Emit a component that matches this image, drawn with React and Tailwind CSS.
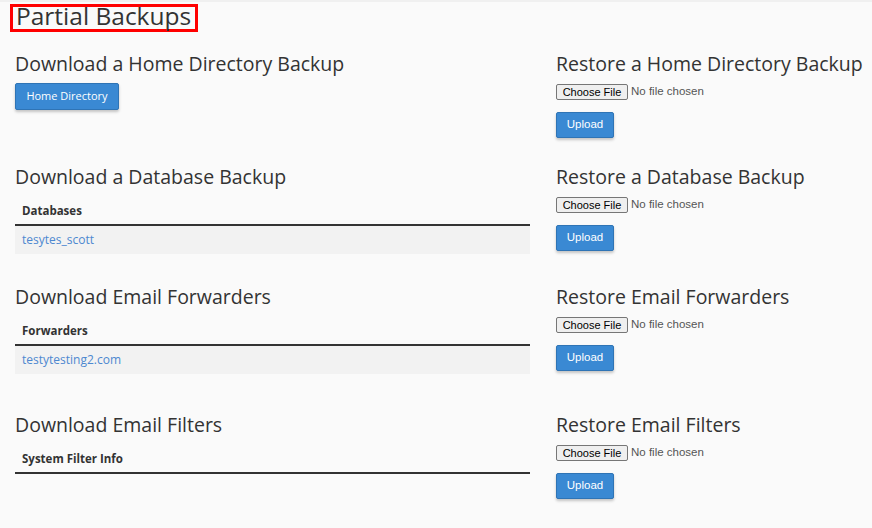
import React from "react";

function FileRow() {
  return (
    <div className="mt-[9px] flex h-[16px] items-center font-['Liberation_Sans',Arial,sans-serif]">
      <span className="flex h-[16px] w-[72px] items-center justify-center rounded-[2px] border border-[#767676] bg-[#efefef] text-[11px] leading-none text-black">
        Choose File
      </span>
      <span className="ml-[3px] text-[11.5px] leading-none text-[#555]">No file chosen</span>
    </div>
  );
}

function UploadButton() {
  return (
    <button className="mt-[12px] flex h-[26px] w-[58px] items-center justify-center rounded-[2px] border border-[#2f74b5] bg-[#3a89d3] font-['Liberation_Sans',Arial,sans-serif] text-[11.5px] text-white shadow-[0_2px_3px_rgba(0,0,0,0.22)]">
      Upload
    </button>
  );
}

function Heading({ children }) {
  return <h2 className="h-[22px] whitespace-nowrap text-[19.5px] leading-[22px] text-[#333]">{children}</h2>;
}

function Table({ header, rows }) {
  return (
    <div className="mt-[9px]">
      <div className="flex h-[29px] items-center border-b-2 border-[#333] px-[7px] text-[11.5px] font-bold text-[#333]">
        {header}
      </div>
      {rows.map((r) => (
        <div key={r} className="flex h-[28px] items-center bg-[#f2f2f2] px-[7px] text-[12px] text-[#4d88d0]">
          {r}
        </div>
      ))}
    </div>
  );
}

function Section({ left, right, className = "" }) {
  return (
    <div className={"flex " + className}>
      <div className="ml-[15px] w-[515px]">{left}</div>
      <div className="ml-[26px] w-[316px]">{right}</div>
    </div>
  );
}

function Restore({ title }) {
  return (
    <>
      <Heading>{title}</Heading>
      <FileRow />
      <UploadButton />
    </>
  );
}

export default function App() {
  return (
    <div className="min-h-screen w-[872px] overflow-hidden border-t-2 border-[#f0f0f0] bg-[#fafafa] font-['Open_Sans',sans-serif] text-[#333]">
      <div className="pl-[10px] pt-[2px]">
        <h1 className="inline-block h-[28px] border-[3px] border-[#ff0000] pb-[4px] pl-[3px] pr-[4px] text-[24.5px] leading-[18px] text-[#333]">
          Partial Backups
        </h1>
      </div>
      <Section
        className="mt-[21px]"
        left={
          <>
            <Heading>Download a Home Directory Backup</Heading>
            <button className="mt-[8px] flex h-[27px] w-[104px] items-center justify-center rounded-[2px] border border-[#2f74b5] bg-[#3a89d3] text-[11px] text-white shadow-[0_2px_3px_rgba(0,0,0,0.22)]">
              Home Directory
            </button>
          </>
        }
        right={<Restore title="Restore a Home Directory Backup" />}
      />
      <Section
        className="mt-[28px]"
        left={
          <>
            <Heading>Download a Database Backup</Heading>
            <Table header="Databases" rows={["tesytes_scott"]} />
          </>
        }
        right={<Restore title="Restore a Database Backup" />}
      />
      <Section
        className="mt-[32px]"
        left={
          <>
            <Heading>Download Email Forwarders</Heading>
            <Table header="Forwarders" rows={["testytesting2.com"]} />
          </>
        }
        right={<Restore title="Restore Email Forwarders" />}
      />
      <Section
        className="mt-[40px]"
        left={
          <>
            <Heading>Download Email Filters</Heading>
            <Table header="System Filter Info" rows={[]} />
          </>
        }
        right={<Restore title="Restore Email Filters" />}
      />
    </div>
  );
}
